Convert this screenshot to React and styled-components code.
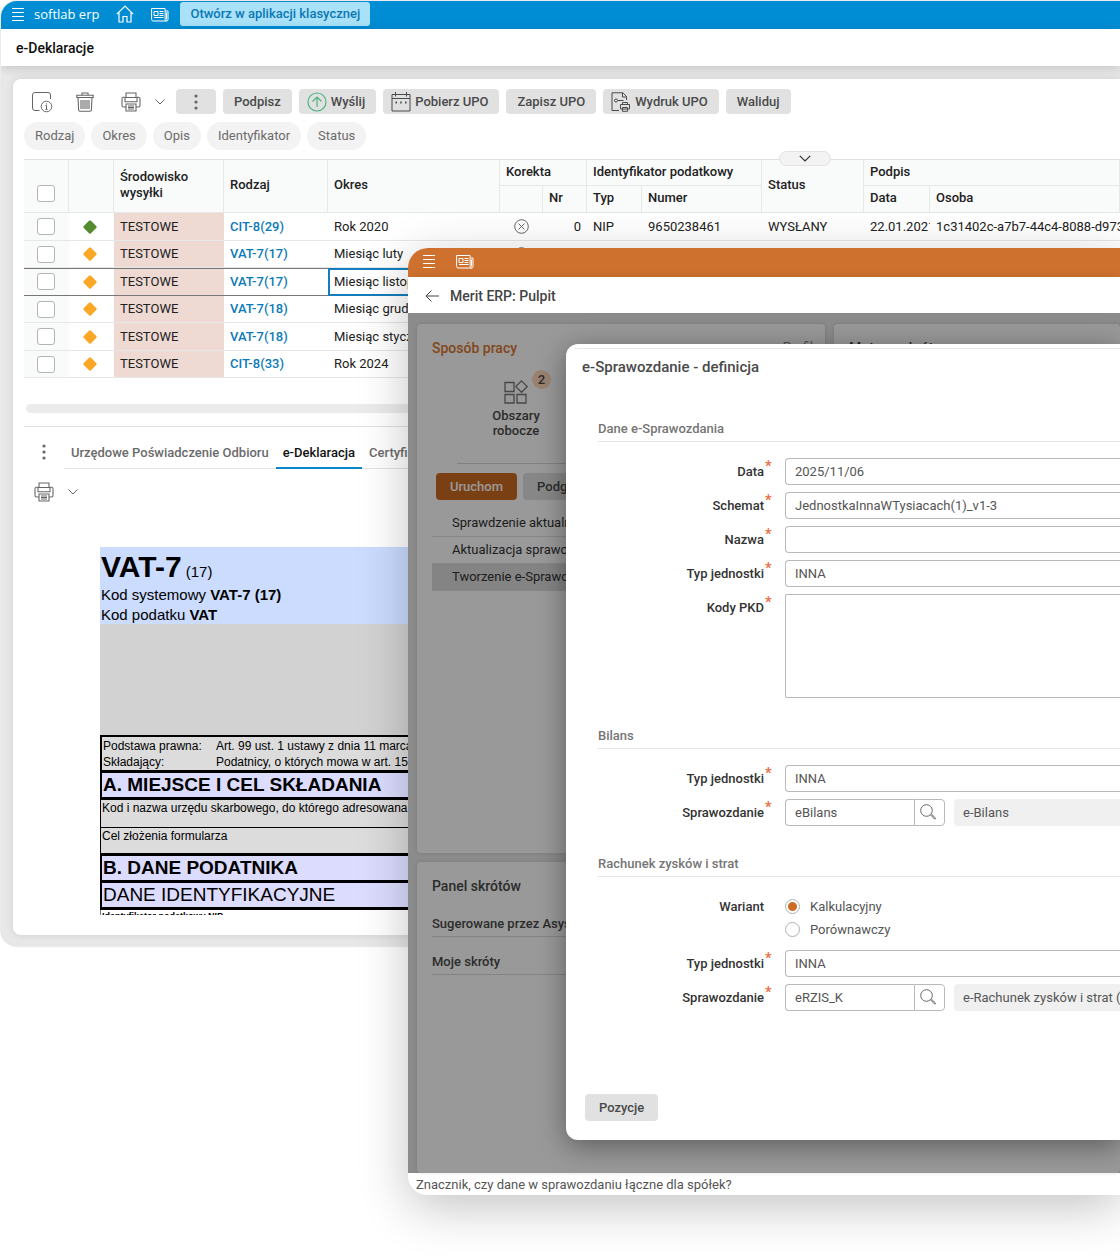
import React from "react";
import styled, { createGlobalStyle, css } from "styled-components";

const rows = [
  { id: 1, done: true, kind: "CIT-8(29)", period: "Rok 2020", full: true },
  { id: 2, kind: "VAT-7(17)", period: "Miesiąc luty" },
  { id: 3, kind: "VAT-7(17)", period: "Miesiąc listopad", active: true },
  { id: 4, kind: "VAT-7(18)", period: "Miesiąc grudzień" },
  { id: 5, kind: "VAT-7(18)", period: "Miesiąc styczeń" },
  { id: 6, kind: "CIT-8(33)", period: "Rok 2024" },
];

const filters = ["Rodzaj", "Okres", "Opis", "Identyfikator", "Status"];

/* ---------- icons ---------- */

const Icon = ({ w, h, children, sw = 1 }) => (
  <svg
    width={w}
    height={h}
    viewBox={`0 0 ${w} ${h}`}
    fill="none"
    stroke="currentColor"
    strokeWidth={sw}
    aria-hidden="true"
  >
    {children}
  </svg>
);

const MenuIcon = () => (
  <Icon w={12} h={13}>
    <path d="M0 .5h12M0 4.5h12M0 8.5h12M0 12.5h12" />
  </Icon>
);

const HomeIcon = () => (
  <Icon w={18} h={18} sw={1.2}>
    <path d="M.8 9.2 9 1l8.200 8.200M3 7.500V17h4v-5.500h4V17h4V7.500" />
  </Icon>
);

const NewsIcon = () => (
  <Icon w={18} h={15}>
    <path d="M.6 1.500h13.500v11a1.500 1.500 0 0 0 1.500 1.500H2.200A1.600 1.600 0 0 1 .6 12.500zM14.500 4h2.500v8.500a1.500 1.500 0 0 1-1.500 1.500M3 4.500h4v4H3zM8.500 4.500h4M8.500 6.500h4M8.500 8.500h4M3 10.500h9.500M15.500 5.500v7" />
  </Icon>
);

const InfoIcon = () => (
  <Icon w={22} h={22}>
    <path d="M8.500 19.500H4A2.500 2.500 0 0 1 1.500 17V4A2.500 2.500 0 0 1 4 1.500h13A2.500 2.500 0 0 1 19.500 4v4" />
    <circle cx="15.500" cy="15.500" r="5.300" />
    <path d="M15.500 14.500v4M15.500 12.300v1.200M14.500 14.500h1M14.500 18.500h2" />
  </Icon>
);

const TrashIcon = () => (
  <Icon w={18} h={20} sw={1.1}>
    <path d="M.8 3.200h16.400v2.300H.8zM6 3V1h6v2M2 5.500l.6 12.300c0 .9.600 1.500 1.400 1.500h10c.8 0 1.400-.6 1.400-1.500L16 5.500M5 8v9M7 8v9M9 8v9M11 8v9M13 8v9" />
  </Icon>
);

const PrinterIcon = () => (
  <Icon w={20} h={20} sw={1.1}>
    <path d="M5 5.500V1h10v4.500M4 5.500h12v4.200H4zM4 5.200H2.500C1.500 5.200 1 6 1 6.800v6.700c0 .9.600 1.500 1.500 1.500H5M16 5.200h1.500c1 0 1.500.8 1.500 1.600v6.700c0 .9-.6 1.500-1.500 1.500H15M5 12h10v7H5zM7 14h6M7 15.500h6M7 17h6" />
  </Icon>
);

const ChevronIcon = () => (
  <Icon w={10} h={6}>
    <path d="M.5.5 5 5 9.500.500" />
  </Icon>
);

const PillChevronIcon = () => (
  <Icon w={12} h={7} sw={1.200}>
    <path d="M.8.800 6 6 11.200.800" />
  </Icon>
);

const DotsIcon = () => (
  <Icon w={4} h={16}>
    <g fill="currentColor" stroke="none">
      <circle cx="2" cy="2" r="1.600" />
      <circle cx="2" cy="8" r="1.600" />
      <circle cx="2" cy="14" r="1.600" />
    </g>
  </Icon>
);

const SendIcon = () => (
  <Icon w={20} h={20} sw={1.200}>
    <circle cx="10" cy="10" r="9" />
    <path d="M10 15V5M5.500 9.500 10 5l4.500 4.500" />
  </Icon>
);

const CalendarIcon = () => (
  <Icon w={20} h={20}>
    <path d="M1 2.500h18v16.500H1zM1 6.500h18M4.500 0v4.500M15.500 0v4.500" />
    <path d="M4.500 10.500h1.500M9.200 10.500h1.500M14 10.500h1.500" strokeWidth="2" />
  </Icon>
);

const PrintDocIcon = () => (
  <Icon w={20} h={20}>
    <path d="M8 18.500H1V.8h11L15.500 4.500V8M11.500.8V5h4M7 8.500h5.500" />
    <circle cx="5" cy="8.500" r="1.500" />
    <path d="M11.500 12.500v-2h5v2M9.500 12.500h9v4.500h-9zM11.500 15.500h5v3.800h-5z" />
  </Icon>
);

const CrossIcon = () => (
  <Icon w={15} h={15}>
    <circle cx="7.500" cy="7.500" r="6.800" />
    <path d="m4.500 4.500 6 6M10.500 4.500l-6 6" />
  </Icon>
);

const DiamondIcon = ({ done }) => (
  <svg width="14" height="14" viewBox="0 0 14 14" aria-hidden="true">
    <path
      d="M6 .8a1.400 1.400 0 0 1 2 0L13.200 6a1.400 1.400 0 0 1 0 2L8 13.200a1.400 1.400 0 0 1-2 0L.8 8a1.400 1.400 0 0 1 0-2z"
      fill={done ? "#558b2f" : "#fba726"}
    />
  </svg>
);

const BackIcon = () => (
  <Icon w={14} h={12}>
    <path d="M14 6H1M6.500.5 1 6l5.500 5.500" />
  </Icon>
);

const AreasIcon = () => (
  <Icon w={24} h={24} sw={1.300}>
    <path d="M1 2.500h9v9H1zM1 14.500h9V23H1zM13 14.500h9V23h-9zM17.500.900l5.700 5.700-5.700 5.700-5.700-5.700z" />
  </Icon>
);

const SearchIcon = () => (
  <Icon w={16} h={16}>
    <circle cx="6.500" cy="6.500" r="5.800" />
    <path d="m10.500 10.800 4 4.200c.7.500 1.500-.3 1-1l-4.200-4" />
  </Icon>
);

/* ---------- styles ---------- */

const GlobalStyle = createGlobalStyle`
  * {
    box-sizing: border-box;
  }

  body {
    margin: 0;
    background: #fff;
    color: #212121;
    font: 400 13px/16px Roboto, "Liberation Sans", sans-serif;
  }

  button, input, textarea {
    margin: 0;
    font: inherit;
    color: inherit;
  }

  svg {
    display: block;
    flex: none;
  }
`;

const Desktop = styled.div`
  position: relative;
  min-height: 100vh;
  overflow: hidden;
`;

const BackWindow = styled.section`
  margin: 1px 0 0 1px;
  border-radius: 16px 0 0 16px;
  overflow: hidden;
  background: #e8e8e8;
  box-shadow: 0 0 2px rgba(0, 0, 0, 0.3);
`;

const TopBar = styled.header`
  display: flex;
  align-items: center;
  height: ${({ $orange }) => ($orange ? 29 : 28)}px;
  padding: 0 0 2px ${({ $orange }) => ($orange ? 15 : 11)}px;
  gap: ${({ $orange }) => ($orange ? 21 : 17)}px;
  background: ${({ $orange }) => ($orange ? "#ce712e" : "#008dd4")};
  color: #fff;
`;

const Brand = styled.div`
  display: flex;
  align-items: center;
  gap: 10px;
  font: 500 13px/16px "Open Sans", sans-serif;
`;

const GhostButton = styled.button`
  display: flex;
  align-items: center;
  padding: 0;
  border: 0;
  background: none;
`;

const ClassicLink = styled.a`
  margin-left: -6px;
  padding: 4px 10px;
  border-radius: 3px;
  background: #a9e1f8;
  color: #0a78b5;
  font-weight: 500;
  text-decoration: none;
`;

const TitleBar = styled.div`
  position: relative;
  display: flex;
  align-items: center;
  height: ${({ $tall }) => ($tall ? 37 : 36)}px;
  padding: ${({ $tall }) => ($tall ? "0 0 0 15px" : "2px 0 0 17px")};
  gap: 11px;
  background: #fff;
  color: ${({ $tall }) => ($tall ? "#111" : "#444")};
  box-shadow: 0 2px 10px rgba(0, 0, 0, 0.16);

  h1, h2 {
    margin: 0;
    font-size: 14px;
    font-weight: 500;
  }
`;

const Panel = styled.main`
  margin: 13px 0 11px 12px;
  padding: 10px 0 20px 11px;
  border-radius: 8px 0 0 8px;
  background: #fff;
  box-shadow: 0 0 8px rgba(0, 0, 0, 0.1);
`;

const Toolbar = styled.div`
  display: flex;
  gap: 7px;
  height: 25px;
  color: #666;
`;

const ToolIcon = styled.button`
  display: flex;
  align-items: center;
  justify-content: center;
  gap: 14px;
  width: ${({ $split }) => ($split ? 59 : 36)}px;
  padding: 0 0 0 ${({ $split }) => ($split ? 7 : 0)}px;
  border: 0;
  background: none;
`;

const ToolButton = styled.button`
  display: flex;
  align-items: center;
  gap: 4px;
  padding: 0 11px;
  border: 0;
  border-radius: 4px;
  background: #e1e1e1;
  color: #4a4a4a;
  font-weight: 500;
  white-space: nowrap;

  ${({ $icon }) =>
    $icon &&
    css`
      padding-left: 8px;
    `}
  ${({ $more }) =>
    $more &&
    css`
      padding: 0 18px;
      color: #666;
    `}
`;

const Green = styled.span`
  color: #4fb283;
`;

const Filters = styled.div`
  display: flex;
  gap: 6px;
  margin-top: 8px;
`;

const Chip = styled.button`
  height: 28px;
  padding: 0 11px;
  border: 0;
  border-radius: 14px;
  background: #f3f3f3;
  color: #6b6b6b;
`;

const TableArea = styled.div`
  position: relative;
  margin-top: 9px;
`;

const CollapseButton = styled.button`
  position: absolute;
  top: -8px;
  left: 755px;
  display: flex;
  align-items: center;
  justify-content: center;
  width: 52px;
  height: 15px;
  border: 1px solid #e2e2e2;
  border-radius: 8px;
  background: #f3f3f3;
  color: #333;
`;

const Table = styled.table`
  width: 100%;
  table-layout: fixed;
  border-spacing: 0;
  border-top: 1px solid #dfe0e0;

  th, td {
    padding: 0 0 0 6px;
    overflow: hidden;
    border-bottom: 1px solid #e6e7e7;
    text-align: left;
    white-space: nowrap;
  }

  th {
    height: 26px;
    padding-bottom: 2px;
    border-right: 1px solid #e6e7e7;
    background: #f9fafa;
    font-weight: 500;
  }

  tr + tr > th {
    height: 27px;
  }

  th.wrap {
    white-space: normal;
  }
`;

const Row = styled.tr`
  height: 28px;

  &:nth-child(even) {
    height: 27px;
  }

  ${({ $active }) =>
    $active &&
    css`
      td {
        border-bottom-color: #777;
        box-shadow: inset 0 1px #777;
      }
    `}
`;

const CheckCell = styled.td`
  && {
    padding-left: 13px;
    background: #f9fafa;
  }
`;

const CheckHead = styled.th`
  && {
    padding: 0 0 10px 13px;
    vertical-align: bottom;
  }
`;

const Checkbox = styled.input.attrs({ type: "checkbox" })`
  display: block;
  appearance: none;
  width: 18px;
  height: 17px;
  border: 1px solid #b4b4b4;
  border-radius: 3px;
  background: #fff;
`;

const StatusCell = styled.td`
  && {
    padding-left: 14px;
  }
`;

const EnvCell = styled.td`
  background: #eedad3;
`;

const PeriodCell = styled.td`
  ${({ $active }) =>
    $active &&
    css`
      && {
        box-shadow: inset 2px 2px #147dbd, inset 0 -1px #147dbd;
        border-bottom-color: #147dbd;
      }
    `}
`;

const NumberCell = styled.td`
  && {
    padding: 0 6px 0 0;
    text-align: right;
  }
`;

const IconCell = styled.td`
  && {
    padding-left: 14px;
    color: #666;
  }
`;

const KindLink = styled.a`
  color: #0b7ab8;
  font-weight: 500;
  text-decoration: none;
`;

const ScrollTrack = styled.div`
  height: 9px;
  margin: 26px 0 0 2px;
  border-radius: 5px;
  background: #ebebeb;
`;

const Details = styled.section`
  margin-top: 13px;
  border-top: 1px solid #e2e2e2;
`;

const TabBar = styled.div`
  display: flex;
  align-items: center;
  height: 34px;
  margin-top: 8px;
  padding-left: 18px;
  gap: 18px;
  color: #666;
`;

const Tabs = styled.div`
  display: flex;
  flex: 1;
  height: 34px;
  border-bottom: 1px solid #e2e2e2;
`;

const Tab = styled.button`
  height: 34px;
  padding: 3px 7px 0;
  border: 0;
  border-bottom: 2px solid ${({ $active }) => ($active ? "#0b87ca" : "transparent")};
  background: none;
  color: ${({ $active }) => ($active ? "#111" : "#6b6b6b")};
  font-weight: 500;
  white-space: nowrap;
`;

const DocTools = styled.div`
  display: flex;
  margin: 13px 0 45px 10px;
  color: #666;

  button {
    gap: 14px;
  }
`;

const Doc = styled.article`
  height: 368px;
  margin-left: 76px;
  overflow: hidden;
  background: #d2d2d2;
  color: #000;
  font-family: "Liberation Sans", Arial, sans-serif;
`;

const DocHead = styled.header`
  height: 77px;
  margin-bottom: 111px;
  padding: 1px 0 0 1px;
  background: #cbdcff;
  font-size: 15px;
  line-height: 20px;

  h3 {
    margin: 0;
    font-size: 30px;
    line-height: 37px;
  }

  small {
    font-size: 15px;
    font-weight: 400;
    line-height: 15px;
  }
`;

const DocInfo = styled.dl`
  display: grid;
  grid-template-columns: 113px 1fr;
  margin: 0;
  padding: 1px 0 0 1px;
  border: solid #000;
  border-width: 2px 0 3px 2px;
  background: #dcdcdc;
  font-size: 12px;
  line-height: 16px;
  white-space: nowrap;

  dd {
    margin: 0;
  }
`;

const DocSection = styled.h4`
  margin: 0;
  padding-left: 1px;
  border: solid #000;
  border-width: 0 0 3px 2px;
  background: #dcdcff;
  font-size: 19px;
  font-weight: ${({ $light }) => ($light ? 400 : 700)};
  line-height: 24px;
`;

const DocField = styled.p`
  height: 28px;
  margin: 0;
  padding-left: 1px;
  border: solid #000;
  border-width: 0 0 ${({ $last }) => ($last ? 3 : 1)}px 1px;
  background: #dcdcdc;
  font-size: 12px;
  line-height: 16px;
  white-space: nowrap;
`;

const DocSmall = styled.p`
  margin: 0;
  padding-left: 1px;
  border-left: 1px solid #777;
  background: #fff;
  font-size: 9px;
  font-weight: 700;
  line-height: 12px;
`;

/* front window */

const FrontWindow = styled.section`
  position: absolute;
  top: 248px;
  left: 408px;
  right: 0;
  border-radius: 20px 0 0 20px;
  box-shadow: 0 12px 50px rgba(0, 0, 0, 0.24);
`;

const FrontClip = styled.div`
  border-radius: 20px 0 0 20px;
  overflow: hidden;
  background: #fff;
`;

const Board = styled.div`
  position: relative;
  display: grid;
  grid-template: 529px 311px / 408px 1fr;
  gap: 9px;
  height: 860px;
  padding: 11px 0 0 9px;
  background: #e8e8e8;
  color: #4a4a4a;
`;

const Card = styled.section`
  padding: 15px 0 0 15px;
  border-radius: 4px;
  background: #fff;
  box-shadow: 0 0 4px rgba(0, 0, 0, 0.12);
  overflow: hidden;
  grid-column: ${({ $wide }) => ($wide ? "1 / 3" : "auto")};
`;

const CardHead = styled.div`
  display: flex;
  justify-content: space-between;
  padding-right: 12px;
  color: #888;

  h3 {
    margin: 0;
    color: ${({ $accent }) => ($accent ? "#d9772f" : "#4a4a4a")};
    font-size: 14px;
    font-weight: 500;
    line-height: 18px;
  }
`;

const AreasButton = styled.button`
  position: relative;
  display: flex;
  flex-direction: column;
  align-items: center;
  width: 80px;
  margin: 23px 0 25px 44px;
  padding: 0;
  gap: 4px;
  border: 0;
  background: none;
  font-weight: 500;
  line-height: 15px;

  svg {
    color: #777;
  }
`;

const Badge = styled.span`
  position: absolute;
  top: -10px;
  left: 56px;
  width: 19px;
  border-radius: 10px;
  background: #ffd9bc;
  line-height: 19px;
  text-align: center;
`;

const Actions = styled.div`
  display: flex;
  gap: 6px;
  margin-left: 25px;
  padding-top: 9px;
  border-top: 1px solid #d8d8d8;
`;

const ActionButton = styled.button`
  height: 27px;
  padding: 0 14px;
  border: 0;
  border-radius: 4px;
  background: ${({ $primary }) => ($primary ? "#ce6a22" : "#e1e1e1")};
  color: ${({ $primary }) => ($primary ? "#fff" : "#4a4a4a")};
  font-weight: 500;

  ${Actions} &:first-child {
    margin-left: -21px;
  }
`;

const TaskList = styled.ul`
  margin: 10px 0 0;
  padding: 0;
  list-style: none;
`;

const Task = styled.li`
  padding: 5px 20px;
  border-bottom: 1px solid ${({ $active }) => ($active ? "#dcdcdc" : "#e0e0e0")};
  background: ${({ $active }) => ($active ? "#dcdcdc" : "transparent")};
  color: #333;
`;

const ShortcutGroup = styled.h4`
  margin: ${({ $first }) => ($first ? 21 : 17)}px 0 0;
  padding-bottom: 4px;
  border-bottom: 1px solid #dcdcdc;
  font-size: 13px;
  font-weight: 500;
`;

const Shade = styled.div`
  position: absolute;
  inset: 0;
  background: rgba(0, 0, 0, 0.4);
`;

const StatusBar = styled.footer`
  padding: 4px 8px 2px;
  background: #fff;
  color: #555;
`;

const Dialog = styled.form`
  position: absolute;
  top: 96px;
  left: 158px;
  right: 0;
  height: 796px;
  display: flex;
  flex-direction: column;
  padding-top: 4px;
  border-radius: 12px 0 0 12px;
  background: #fff;
  color: #555;
  box-shadow: 0 6px 28px rgba(0, 0, 0, 0.4);

  > h2 {
    margin: 0 0 0 8px;
    padding: 9px 8px;
    border-top: 1px solid #e6e6e6;
    color: #4a4a4a;
    font-size: 15px;
    font-weight: 500;
    line-height: 18px;
  }
`;

const Group = styled.fieldset`
  min-width: 0;
  margin: ${({ $first }) => ($first ? 36 : 23)}px 0 0 32px;
  padding: 0;
  border: 0;

  legend {
    width: 100%;
    margin-bottom: 16px;
    padding: 0 0 4px;
    border-bottom: 1px solid #e6e6e6;
    color: #757575;
    font-weight: 500;
  }
`;

const Field = styled.div`
  display: grid;
  grid-template-columns: 166px 1fr;
  column-gap: 21px;
  margin-bottom: 7px;
`;

const Label = styled.label`
  position: relative;
  text-align: right;
  color: #333;
  font-weight: 500;
  line-height: 27px;
`;

const Required = styled.span`
  position: absolute;
  top: -5px;
  left: 167px;
  color: #ee6a40;
  font-size: 15px;
`;

const TextInput = styled.input`
  width: 100%;
  height: 27px;
  padding: 0 9px;
  border: 1px solid #b9b9b9;
  border-right: 0;
  border-radius: 4px 0 0 4px;
  outline: none;
  background: #fff;
`;

const TextArea = styled.textarea`
  display: block;
  width: 100%;
  height: 104px;
  border: 1px solid #b9b9b9;
  border-right: 0;
  border-radius: 2px 0 0 2px;
  background: #fff;
  resize: none;
`;

const Lookup = styled.div`
  display: grid;
  grid-template-columns: 129px 31px 1fr;
`;

const LookupButton = styled.button`
  display: flex;
  align-items: center;
  justify-content: center;
  padding: 0 4px 2px 0;
  border: 1px solid #b9b9b9;
  border-radius: 0 4px 4px 0;
  background: #fff;
  color: #666;
`;

const ReadOnlyInput = styled(TextInput)`
  margin-left: 9px;
  border: 0;
  background: #f0f0f0;
`;

const Radios = styled.div`
  padding-top: 4px;
`;

const RadioLabel = styled.label`
  display: flex;
  align-items: center;
  gap: 10px;
  height: 23px;
  padding-bottom: 4px;
`;

const Radio = styled.input.attrs({ type: "radio" })`
  appearance: none;
  width: 15px;
  height: 15px;
  border: 1px solid #b0b0b0;
  border-radius: 50%;
  background: #fff;

  &:checked {
    background: radial-gradient(circle, #ce6c25 4px, #fff 5px);
  }
`;

const DialogFooter = styled.div`
  margin: auto 0 19px 19px;
`;

/* ---------- parts ---------- */

const FormField = ({ id, label, required = true, children }) => (
  <Field>
    <Label htmlFor={id}>
      {label}
      {required && <Required>*</Required>}
    </Label>
    {children}
  </Field>
);

const LookupField = ({ id, value, name }) => (
  <FormField id={id} label="Sprawozdanie">
    <Lookup>
      <TextInput id={id} defaultValue={value} />
      <LookupButton type="button" aria-label="Szukaj">
        <SearchIcon />
      </LookupButton>
      <ReadOnlyInput aria-label="Nazwa sprawozdania" value={name} readOnly />
    </Lookup>
  </FormField>
);

const DeclarationsTable = () => (
  <TableArea>
    <Table>
      <colgroup>
        <col width="45" />
        <col width="45" />
        <col width="110" />
        <col width="104" />
        <col width="172" />
        <col width="43" />
        <col width="44" />
        <col width="55" />
        <col width="120" />
        <col width="102" />
        <col width="66" />
        <col />
      </colgroup>
      <thead>
        <tr>
          <CheckHead rowSpan={2}>
            <Checkbox aria-label="Zaznacz wszystkie" />
          </CheckHead>
          <th rowSpan={2} />
          <th rowSpan={2} className="wrap">
            Środowisko wysyłki
          </th>
          <th rowSpan={2}>Rodzaj</th>
          <th rowSpan={2}>Okres</th>
          <th colSpan={2}>Korekta</th>
          <th colSpan={2}>Identyfikator podatkowy</th>
          <th rowSpan={2}>Status</th>
          <th colSpan={2}>Podpis</th>
        </tr>
        <tr>
          <th />
          <th>Nr</th>
          <th>Typ</th>
          <th>Numer</th>
          <th>Data</th>
          <th>Osoba</th>
        </tr>
      </thead>
      <tbody>
        {rows.map((row) => (
          <Row key={row.id} $active={row.active}>
            <CheckCell>
              <Checkbox aria-label={`Zaznacz ${row.kind}`} />
            </CheckCell>
            <StatusCell>
              <DiamondIcon done={row.done} />
            </StatusCell>
            <EnvCell>TESTOWE</EnvCell>
            <td>
              <KindLink href="#">{row.kind}</KindLink>
            </td>
            <PeriodCell $active={row.active}>{row.period}</PeriodCell>
            <IconCell>
              <CrossIcon />
            </IconCell>
            <NumberCell>{row.full && "0"}</NumberCell>
            <td>{row.full && "NIP"}</td>
            <td>{row.full && "9650238461"}</td>
            <td>{row.full && "WYSŁANY"}</td>
            <td>{row.full && "22.01.2021"}</td>
            <td>{row.full && "1c31402c-a7b7-44c4-8088-d973e"}</td>
          </Row>
        ))}
      </tbody>
    </Table>
    <CollapseButton aria-label="Rozwiń">
      <PillChevronIcon />
    </CollapseButton>
  </TableArea>
);

const VatDocument = () => (
  <Doc>
    <DocHead>
      <h3>
        VAT-7<small> (17)</small>
      </h3>
      <div>
        Kod systemowy <b>VAT-7 (17)</b>
      </div>
      <div>
        Kod podatku <b>VAT</b>
      </div>
    </DocHead>
    <DocInfo>
      <dt>Podstawa prawna:</dt>
      <dd>Art. 99 ust. 1 ustawy z dnia 11 marca 2004 r.</dd>
      <dt>Składający:</dt>
      <dd>Podatnicy, o których mowa w art. 15 ustawy</dd>
    </DocInfo>
    <DocSection>A. MIEJSCE I CEL SKŁADANIA</DocSection>
    <DocField>Kod i nazwa urzędu skarbowego, do którego adresowana jest deklaracja</DocField>
    <DocField $last>Cel złożenia formularza</DocField>
    <DocSection>B. DANE PODATNIKA</DocSection>
    <DocSection $light>DANE IDENTYFIKACYJNE</DocSection>
    <DocSmall>Identyfikator podatkowy NIP</DocSmall>
  </Doc>
);

const DefinitionDialog = () => (
  <Dialog>
    <h2>e-Sprawozdanie - definicja</h2>
    <Group $first>
      <legend>Dane e-Sprawozdania</legend>
      <FormField id="date" label="Data">
        <TextInput id="date" defaultValue="2025/11/06" />
      </FormField>
      <FormField id="schema" label="Schemat">
        <TextInput id="schema" defaultValue="JednostkaInnaWTysiacach(1)_v1-3" />
      </FormField>
      <FormField id="name" label="Nazwa">
        <TextInput id="name" />
      </FormField>
      <FormField id="unit" label="Typ jednostki">
        <TextInput id="unit" defaultValue="INNA" />
      </FormField>
      <FormField id="pkd" label="Kody PKD">
        <TextArea id="pkd" />
      </FormField>
    </Group>
    <Group>
      <legend>Bilans</legend>
      <FormField id="balance-unit" label="Typ jednostki">
        <TextInput id="balance-unit" defaultValue="INNA" />
      </FormField>
      <LookupField id="balance-report" value="eBilans" name="e-Bilans" />
    </Group>
    <Group>
      <legend>Rachunek zysków i strat</legend>
      <FormField id="variant" label="Wariant" required={false}>
        <Radios>
          <RadioLabel>
            <Radio id="variant" name="variant" defaultChecked />
            Kalkulacyjny
          </RadioLabel>
          <RadioLabel>
            <Radio name="variant" />
            Porównawczy
          </RadioLabel>
        </Radios>
      </FormField>
      <FormField id="profit-unit" label="Typ jednostki">
        <TextInput id="profit-unit" defaultValue="INNA" />
      </FormField>
      <LookupField
        id="profit-report"
        value="eRZIS_K"
        name="e-Rachunek zysków i strat (kalkulacyjny)"
      />
    </Group>
    <DialogFooter>
      <ActionButton type="button">Pozycje</ActionButton>
    </DialogFooter>
  </Dialog>
);

const App = () => {
  return (
    <Desktop>
      <GlobalStyle />
      <BackWindow>
        <TopBar>
          <Brand>
            <GhostButton aria-label="Menu">
              <MenuIcon />
            </GhostButton>
            softlab erp
          </Brand>
          <GhostButton aria-label="Start">
            <HomeIcon />
          </GhostButton>
          <GhostButton aria-label="Aktualności">
            <NewsIcon />
          </GhostButton>
          <ClassicLink href="#">Otwórz w aplikacji klasycznej</ClassicLink>
        </TopBar>
        <TitleBar $tall>
          <h1>e-Deklaracje</h1>
        </TitleBar>
        <Panel>
          <Toolbar>
            <ToolIcon aria-label="Informacje">
              <InfoIcon />
            </ToolIcon>
            <ToolIcon aria-label="Usuń">
              <TrashIcon />
            </ToolIcon>
            <ToolIcon $split aria-label="Drukuj">
              <PrinterIcon />
              <ChevronIcon />
            </ToolIcon>
            <ToolButton $more aria-label="Więcej">
              <DotsIcon />
            </ToolButton>
            <ToolButton>Podpisz</ToolButton>
            <ToolButton $icon>
              <Green>
                <SendIcon />
              </Green>
              Wyślij
            </ToolButton>
            <ToolButton $icon>
              <CalendarIcon />
              Pobierz UPO
            </ToolButton>
            <ToolButton>Zapisz UPO</ToolButton>
            <ToolButton $icon>
              <PrintDocIcon />
              Wydruk UPO
            </ToolButton>
            <ToolButton>Waliduj</ToolButton>
          </Toolbar>
          <Filters>
            {filters.map((name) => (
              <Chip key={name}>{name}</Chip>
            ))}
          </Filters>
          <DeclarationsTable />
          <ScrollTrack />
          <Details>
            <TabBar>
              <GhostButton aria-label="Więcej zakładek">
                <DotsIcon />
              </GhostButton>
              <Tabs>
                <Tab>Urzędowe Poświadczenie Odbioru</Tab>
                <Tab $active>e-Deklaracja</Tab>
                <Tab>Certyfikaty</Tab>
              </Tabs>
            </TabBar>
            <DocTools>
              <GhostButton aria-label="Drukuj dokument">
                <PrinterIcon />
                <ChevronIcon />
              </GhostButton>
            </DocTools>
            <VatDocument />
          </Details>
        </Panel>
      </BackWindow>

      <FrontWindow>
        <FrontClip>
          <TopBar $orange>
            <GhostButton aria-label="Menu">
              <MenuIcon />
            </GhostButton>
            <GhostButton aria-label="Aktualności">
              <NewsIcon />
            </GhostButton>
          </TopBar>
          <TitleBar>
            <GhostButton aria-label="Wstecz">
              <BackIcon />
            </GhostButton>
            <h2>Merit ERP: Pulpit</h2>
          </TitleBar>
          <Board>
            <Card>
              <CardHead $accent>
                <h3>Sposób pracy</h3>
                <span>Profil</span>
              </CardHead>
              <AreasButton>
                <AreasIcon />
                Obszary robocze
                <Badge>2</Badge>
              </AreasButton>
              <Actions>
                <ActionButton $primary>Uruchom</ActionButton>
                <ActionButton>Podgląd</ActionButton>
              </Actions>
              <TaskList>
                <Task>Sprawdzenie aktualności</Task>
                <Task>Aktualizacja sprawozdania</Task>
                <Task $active>Tworzenie e-Sprawozdania</Task>
              </TaskList>
            </Card>
            <Card>
              <CardHead>
                <h3>Motywy skróty</h3>
              </CardHead>
            </Card>
            <Card $wide>
              <CardHead>
                <h3>Panel skrótów</h3>
              </CardHead>
              <ShortcutGroup $first>Sugerowane przez Asystenta</ShortcutGroup>
              <ShortcutGroup>Moje skróty</ShortcutGroup>
            </Card>
            <Shade />
          </Board>
          <StatusBar>Znacznik, czy dane w sprawozdaniu łączne dla spółek?</StatusBar>
        </FrontClip>
        <DefinitionDialog />
      </FrontWindow>
    </Desktop>
  );
};

export default App;
